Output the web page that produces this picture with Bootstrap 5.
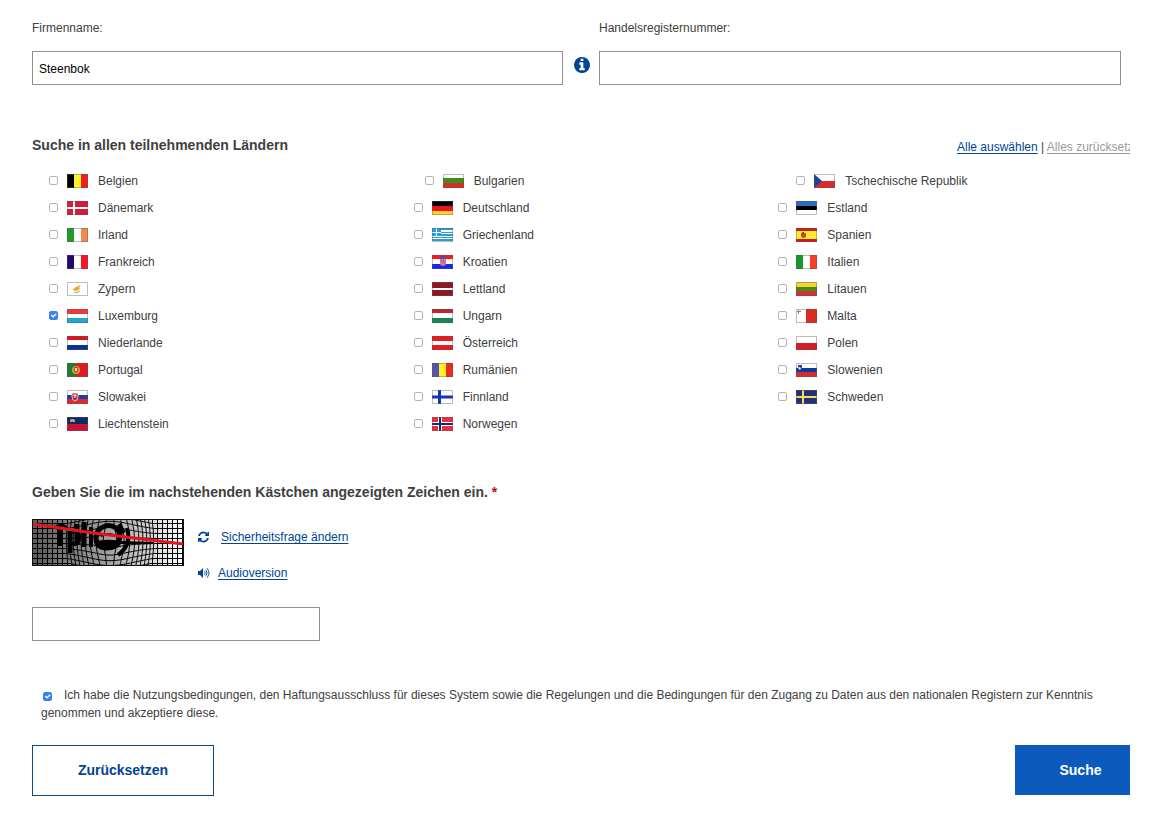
<!DOCTYPE html>
<html lang="de">
<head>
<meta charset="utf-8">
<meta name="viewport" content="width=device-width, initial-scale=1">
<title>Unternehmenssuche</title>
<link href="https://cdn.jsdelivr.net/npm/bootstrap@5.3.0/dist/css/bootstrap.min.css" rel="stylesheet">
<style>
body{font-family:"Liberation Sans",Arial,sans-serif;font-size:12px;line-height:18px;color:#404040;background:#fff}
.page{padding:19px 30px 28px 32px}
.search-fields{display:grid;grid-template-columns:531fr 36px 522fr;row-gap:14px;margin-right:9px}
.form-control{height:34px;border:1px solid #8e8e8e;border-radius:0;font-size:12px;line-height:18px;padding:8px 6px 6px;color:#000}
.search-fields .info-link{line-height:0;padding:6px 0 0 11px}
a{color:#004494;text-underline-offset:2px}
svg{fill:currentColor}
h2{font-size:14px;line-height:20px;font-weight:700;margin:0}
.countries-head{margin-top:50px}
.select-links{width:173px;overflow:hidden;white-space:nowrap;padding-top:3px}
.select-links .muted-link{color:#999}
.countries{margin:11px 4px 0 0}
.country{height:27px;padding-left:17px}
.country label{margin-left:10px}
.form-check-input[type=checkbox]{width:9px;height:9px;margin:0;border:1px solid #b4b4b4;border-radius:2px;flex:none}
.form-check-input[type=checkbox]:checked{background-color:#3b82f3;border-color:#3b82f3;background-size:9px 9px}
.indent-a{padding-left:28px}
.indent-b{padding-left:35px}
.flag{width:21px;height:14px;margin-left:9px;outline:1px solid rgba(90,90,90,.4);outline-offset:-1px;flex:none}
.captcha-head{margin-top:45px}
.req{color:#d0021b}
.captcha{width:152px;height:47px;flex:none}
.captcha-row{margin-top:17px}
.captcha-tools{margin:9px 0 0 14px;line-height:18px}
.captcha-tools li+li{margin-top:18px}
.captcha-input{width:288px;margin-top:25px}
.terms{margin-top:45px;padding:0 30px 0 9px}
.terms .form-check-input[type=checkbox]{margin:0 12px 0 2px;vertical-align:-2px}
.actions{margin-top:23px}
.btn{border-radius:0;font-size:14px;line-height:20px;font-weight:700}
.btn-reset{width:182px;height:51px;border:1px solid #0a4a80;color:#004494;padding:0 0 2px}
.btn-search{width:115px;height:50px;background:#0c5bbc;color:#fff;padding:0 28px 0 44px;border:0}
.btn-search:hover{background:#004494;color:#fff}
</style>
<script src="https://cdn.jsdelivr.net/npm/bootstrap@5.3.0/dist/js/bootstrap.bundle.min.js"></script>
</head>
<body>
<main class="page">
<form onsubmit="return false">
  <div class="search-fields">
    <label for="firm">Firmenname:</label><span></span>
    <label for="regno">Handelsregisternummer:</label>
    <input class="form-control" id="firm" type="text" value="Steenbok">
    <a class="info-link" href="#" aria-label="Hinweis"><svg width="16" height="16" viewBox="0 128 1536 1536"><path d="M1024 1376v-160q0-14-9-23t-23-9h-96v-512q0-14-9-23t-23-9h-320q-14 0-23 9t-9 23v160q0 14 9 23t23 9h96v320h-96q-14 0-23 9t-9 23v160q0 14 9 23t23 9h448q14 0 23-9t9-23zm-128-896v-160q0-14-9-23t-23-9h-192q-14 0-23 9t-9 23v160q0 14 9 23t23 9h192q14 0 23-9t9-23zm640 416q0 209-103 385.5t-279.5 279.5-385.5 103-385.5-103-279.5-279.5-103-385.5 103-385.5 279.5-279.5 385.5-103 385.5 103 279.5 279.5 103 385.5z"/></svg></a>
    <input class="form-control" id="regno" type="text">
  </div>

  <div class="countries-head d-flex justify-content-between">
    <h2>Suche in allen teilnehmenden Ländern</h2>
    <div class="select-links"><a href="#">Alle auswählen</a> | <a class="muted-link" href="#">Alles zurücksetzen</a></div>
  </div>

  <div class="countries row g-0">
    <div class="col-4 country d-flex align-items-center"><input class="form-check-input" type="checkbox" id="be"><svg class="flag" viewBox="0 0 21 14"><path fill="#000" d="M0 0h7v14H0z"/><path fill="#fff22d" d="M7 0h7v14H7z"/><path fill="#f01c24" d="M14 0h7v14h-7z"/></svg><label for="be">Belgien</label></div>
    <div class="col-4 country indent-a d-flex align-items-center"><input class="form-check-input" type="checkbox" id="bg"><svg class="flag" viewBox="0 0 21 14"><path fill="#fff" d="M0 0h21v14H0z"/><path fill="#3f9016" d="M0 4h21v6H0z"/><path fill="#d92c26" d="M0 9h21v5H0z"/></svg><label for="bg">Bulgarien</label></div>
    <div class="col-4 country indent-b d-flex align-items-center"><input class="form-check-input" type="checkbox" id="cz"><svg class="flag" viewBox="0 0 21 14"><path fill="#fff" d="M0 0h21v7H0z"/><path fill="#dc2a2a" d="M0 7h21v7H0z"/><path fill="#18449b" d="M0 0l8 7-8 7z"/></svg><label for="cz">Tschechische Republik</label></div>

    <div class="col-4 country d-flex align-items-center"><input class="form-check-input" type="checkbox" id="dk"><svg class="flag" viewBox="0 0 21 14"><path fill="#d01c3c" d="M0 0h21v14H0z"/><path fill="#fff" d="M6 0h2v14H6zM0 6h21v2H0z"/></svg><label for="dk">Dänemark</label></div>
    <div class="col-4 country d-flex align-items-center"><input class="form-check-input" type="checkbox" id="de"><svg class="flag" viewBox="0 0 21 14"><path fill="#000" d="M0 0h21v5H0z"/><path fill="#ee1512" d="M0 5h21v5H0z"/><path fill="#ffd138" d="M0 10h21v4H0z"/></svg><label for="de">Deutschland</label></div>
    <div class="col-4 country d-flex align-items-center"><input class="form-check-input" type="checkbox" id="ee"><svg class="flag" viewBox="0 0 21 14"><path fill="#2c6dc6" d="M0 0h21v5H0z"/><path fill="#000" d="M0 5h21v5H0z"/><path fill="#fff" d="M0 9h21v5H0z"/></svg><label for="ee">Estland</label></div>

    <div class="col-4 country d-flex align-items-center"><input class="form-check-input" type="checkbox" id="ie"><svg class="flag" viewBox="0 0 21 14"><path fill="#209a28" d="M0 0h7v14H0z"/><path fill="#fff" d="M7 0h7v14H7z"/><path fill="#f28a4c" d="M14 0h7v14h-7z"/></svg><label for="ie">Irland</label></div>
    <div class="col-4 country d-flex align-items-center"><input class="form-check-input" type="checkbox" id="gr"><svg class="flag border-0" viewBox="0 0 21 14"><path fill="#fff" d="M0 0h21v13H0z"/><path fill="#2c9bdc" d="M0 0h21v2H0zM0 4h21v1H0zM0 6h21v2H0zM0 9h21v1H0zM0 11h21v2H0z"/><path fill="#2c9bdc" d="M0 0h9v8H0z"/><path fill="#fff" d="M4 0h1v8H4zM0 4h9v1H0z"/></svg><label for="gr">Griechenland</label></div>
    <div class="col-4 country d-flex align-items-center"><input class="form-check-input" type="checkbox" id="es"><svg class="flag" viewBox="0 0 21 14"><path fill="#cf1720" d="M0 0h21v14H0z"/><path fill="#ffee2a" d="M0 3h21v8H0z"/><path fill="#c25a1c" d="M5 5h5v4l-2 1H7L5 9z"/><path fill="#a8442c" d="M6 4h2v3H6zM8 7h1v2H8z"/></svg><label for="es">Spanien</label></div>

    <div class="col-4 country d-flex align-items-center"><input class="form-check-input" type="checkbox" id="fr"><svg class="flag" viewBox="0 0 21 14"><path fill="#24086e" d="M0 0h7v14H0z"/><path fill="#fff" d="M7 0h7v14H7z"/><path fill="#fb1423" d="M14 0h7v14h-7z"/></svg><label for="fr">Frankreich</label></div>
    <div class="col-4 country d-flex align-items-center"><input class="form-check-input" type="checkbox" id="hr"><svg class="flag" viewBox="0 0 21 14"><path fill="#ff1517" d="M0 0h21v5H0z"/><path fill="#fff" d="M0 4h21v6H0z"/><path fill="#1728ee" d="M0 9h21v5H0z"/><path fill="#d9749b" d="M8 4h6v4q0 3-3 3T8 8z"/><path fill="#45549b" d="M8 2l1.500-1h3l1.500 1v2H8z"/><path fill="#bd3f6c" d="M9 5h1v1H9zM11 5h1v1h-1zM10 7h1v1h-1zM12 7h1v1h-1z"/></svg><label for="hr">Kroatien</label></div>
    <div class="col-4 country d-flex align-items-center"><input class="form-check-input" type="checkbox" id="it"><svg class="flag" viewBox="0 0 21 14"><path fill="#169a25" d="M0 0h7v14H0z"/><path fill="#fff" d="M7 0h7v14H7z"/><path fill="#fb3c26" d="M14 0h7v14h-7z"/></svg><label for="it">Italien</label></div>

    <div class="col-4 country d-flex align-items-center"><input class="form-check-input" type="checkbox" id="cy"><svg class="flag" viewBox="0 0 21 14"><path fill="#fff" d="M0 0h21v14H0z"/><path fill="#f3a62c" d="M6 7l3-2 5-2-2 3 1 1-3 2-3-.5z"/><path fill="none" stroke="#7dba54" stroke-width="1" d="M7 10q3 2 6-1"/></svg><label for="cy">Zypern</label></div>
    <div class="col-4 country d-flex align-items-center"><input class="form-check-input" type="checkbox" id="lv"><svg class="flag" viewBox="0 0 21 14"><path fill="#8d1824" d="M0 0h21v14H0z"/><path fill="#fff" d="M0 6h21v2H0z"/></svg><label for="lv">Lettland</label></div>
    <div class="col-4 country d-flex align-items-center"><input class="form-check-input" type="checkbox" id="lt"><svg class="flag" viewBox="0 0 21 14"><path fill="#f9d42c" d="M0 0h21v5H0z"/><path fill="#3f8d15" d="M0 5h21v5H0z"/><path fill="#d92c34" d="M0 9h21v5H0z"/></svg><label for="lt">Litauen</label></div>

    <div class="col-4 country d-flex align-items-center"><input class="form-check-input" type="checkbox" id="lu" checked><svg class="flag" viewBox="0 0 21 14"><path fill="#ed3840" d="M0 0h21v5H0z"/><path fill="#fff" d="M0 5h21v5H0z"/><path fill="#28a3d5" d="M0 9h21v5H0z"/></svg><label for="lu">Luxemburg</label></div>
    <div class="col-4 country d-flex align-items-center"><input class="form-check-input" type="checkbox" id="hu"><svg class="flag" viewBox="0 0 21 14"><path fill="#c8202f" d="M0 0h21v5H0z"/><path fill="#fff" d="M0 4h21v6H0z"/><path fill="#158651" d="M0 9h21v5H0z"/></svg><label for="hu">Ungarn</label></div>
    <div class="col-4 country d-flex align-items-center"><input class="form-check-input" type="checkbox" id="mt"><svg class="flag" viewBox="0 0 21 14"><path fill="#fff" d="M0 0h11v14H0z"/><path fill="#dc2b20" d="M10 0h11v14H10z"/><path fill="#888" d="M2 1h1v4H2zM1 2h4v1H1z"/></svg><label for="mt">Malta</label></div>

    <div class="col-4 country d-flex align-items-center"><input class="form-check-input" type="checkbox" id="nl"><svg class="flag" viewBox="0 0 21 14"><path fill="#e0141c" d="M0 0h21v5H0z"/><path fill="#fff" d="M0 4h21v6H0z"/><path fill="#0b2f96" d="M0 9h21v5H0z"/></svg><label for="nl">Niederlande</label></div>
    <div class="col-4 country d-flex align-items-center"><input class="form-check-input" type="checkbox" id="at"><svg class="flag" viewBox="0 0 21 14"><path fill="#ee161f" d="M0 0h21v14H0z"/><path fill="#fff" d="M0 5h21v4H0z"/></svg><label for="at">Österreich</label></div>
    <div class="col-4 country d-flex align-items-center"><input class="form-check-input" type="checkbox" id="pl"><svg class="flag" viewBox="0 0 21 14"><path fill="#fff" d="M0 0h21v7H0z"/><path fill="#d51d2a" d="M0 7h21v7H0z"/></svg><label for="pl">Polen</label></div>

    <div class="col-4 country d-flex align-items-center"><input class="form-check-input" type="checkbox" id="pt"><svg class="flag" viewBox="0 0 21 14"><path fill="#227b2c" d="M0 0h9v14H0z"/><path fill="#e01b20" d="M9 0h12v14H9z"/><circle cx="9" cy="7" r="4" fill="#c9a33a"/><path fill="#d8342c" d="M7 4h4v4q-2 3-4 0z"/><path fill="#f3e8d8" d="M8 5h2v3H8z"/></svg><label for="pt">Portugal</label></div>
    <div class="col-4 country d-flex align-items-center"><input class="form-check-input" type="checkbox" id="ro"><svg class="flag" viewBox="0 0 21 14"><path fill="#5555a8" d="M0 0h7v14H0z"/><path fill="#fff028" d="M7 0h8v14H7z"/><path fill="#ee2b1b" d="M14 0h7v14h-7z"/></svg><label for="ro">Rumänien</label></div>
    <div class="col-4 country d-flex align-items-center"><input class="form-check-input" type="checkbox" id="si"><svg class="flag" viewBox="0 0 21 14"><path fill="#fff" d="M0 0h21v5H0z"/><path fill="#0e3b9c" d="M0 5h21v5H0z"/><path fill="#d72c2f" d="M0 9h21v5H0z"/><path fill="#1d4aa2" d="M2 2h4v3q0 2-2 3-2-1-2-3z"/><path fill="#fff" d="M2 5l1-1 2 1-1 2z"/></svg><label for="si">Slowenien</label></div>

    <div class="col-4 country d-flex align-items-center"><input class="form-check-input" type="checkbox" id="sk"><svg class="flag" viewBox="0 0 21 14"><path fill="#fff" d="M0 0h21v5H0z"/><path fill="#193fa4" d="M0 5h21v5H0z"/><path fill="#e12b2b" d="M0 9h21v5H0z"/><path fill="#e12b2b" stroke="#fff" stroke-width=".7" d="M5 3h6v4q0 3-3 4-3-1-3-4z"/><path fill="#fff" d="M7.500 4h1v4h-1zM6.500 5h3v1h-3z"/><path fill="#193fa4" d="M6 8h4L8 10z"/></svg><label for="sk">Slowakei</label></div>
    <div class="col-4 country d-flex align-items-center"><input class="form-check-input" type="checkbox" id="fi"><svg class="flag" viewBox="0 0 21 14"><path fill="#fff" d="M0 0h21v14H0z"/><path fill="#1634b8" d="M6 0h3v14H6zM0 5.500h21v3H0z"/></svg><label for="fi">Finnland</label></div>
    <div class="col-4 country d-flex align-items-center"><input class="form-check-input" type="checkbox" id="se"><svg class="flag" viewBox="0 0 21 14"><path fill="#20307c" d="M0 0h21v14H0z"/><path fill="#fbdf50" d="M6 0h2v14H6zM0 6h21v2H0z"/></svg><label for="se">Schweden</label></div>

    <div class="col-4 country d-flex align-items-center"><input class="form-check-input" type="checkbox" id="li"><svg class="flag" viewBox="0 0 21 14"><path fill="#08286e" d="M0 0h21v7H0z"/><path fill="#cc1230" d="M0 7h21v7H0z"/><path fill="#c3a452" d="M3 3l1-1h3l1 1v2H3z"/></svg><label for="li">Liechtenstein</label></div>
    <div class="col-4 country d-flex align-items-center"><input class="form-check-input" type="checkbox" id="no"><svg class="flag" viewBox="0 0 21 14"><path fill="#ee2d41" d="M0 0h21v14H0z"/><path fill="#fff" d="M6 0h4v14H6zM0 5h21v4H0z"/><path fill="#122b66" d="M7 0h2v14H7zM0 6h21v2H0z"/></svg><label for="no">Norwegen</label></div>
  </div>

  <h2 class="captcha-head"><label for="captcha">Geben Sie die im nachstehenden Kästchen angezeigten Zeichen ein. <span class="req">*</span></label></h2>
  <div class="captcha-row d-flex align-items-start">
    <svg class="captcha" viewBox="0 0 152 47" role="img" aria-label="Sicherheitsfrage">
      <defs><linearGradient id="shade"><stop offset="0" stop-color="#5c5c5c"/><stop offset=".5" stop-color="#a0a0a0"/><stop offset="1" stop-color="#fff"/></linearGradient></defs>
      <rect width="152" height="47" fill="url(#shade)"/>
      <path id="mesh" fill="none" stroke="#000" stroke-width="1"/>
      <g fill="none" stroke="#000">
        <path stroke-width="5" d="M28 7V27M38 12V34M45 5V26M52 3V28"/>
        <path stroke-width="4" d="M23 9q7-5 12 1M39 13q9-3 8 7-1 7-8 4M59 8V28"/>
        <path stroke-width="5" d="M69 9q8-5 15 0 6 5 3 13-4 7-12 7-10 0-11-9 0-8 5-11"/>
        <path stroke-width="4" d="M95 9q5 17-9 27M87 5l5 9"/>
        <path stroke-width="2" d="M69 17q8-4 13 0"/>
      </g>
      <path fill="#000" d="M62 23q12-4 26-1l33 1v2H89q-4 6-13 6-11 0-14-8z"/>
      <path stroke="#e8131c" stroke-width="3" d="M1 5l60 9 90 11"/>
      <rect x=".5" y=".5" width="151" height="46" fill="none" stroke="#111"/>
    </svg>
    <ul class="captcha-tools list-unstyled mb-0">
      <li class="d-flex align-items-center"><a href="#" class="d-flex align-items-center" aria-label="Neu laden"><svg width="11" height="12" viewBox="128 128 1536 1536"><path d="M1639 1056q0 5-1 7-64 268-268 434.500t-478 166.500q-146 0-282.500-55t-243.500-157l-129 129q-19 19-45 19t-45-19-19-45v-448q0-26 19-45t45-19h448q26 0 45 19t19 45-19 45l-137 137q71 66 161 102t187 36q134 0 250-65t186-179q11-17 53-117 8-23 30-23h192q13 0 22.500 9.500t9.500 22.500zm25-800v448q0 26-19 45t-45 19h-448q-26 0-45-19t-19-45 19-45l138-138q-148-137-349-137-134 0-250 65t-186 179q-11 17-53 117-8 23-30 23h-199q-13 0-22.500-9.500t-9.500-22.500v-7q65-268 270-434.500t480-166.500q146 0 284 55.500t245 156.500l130-129q19-19 45-19t45 19 19 45z"/></svg></a><a class="ms-2 ps-1" href="#">Sicherheitsfrage ändern</a></li>
      <li class="d-flex align-items-center"><a href="#" class="d-flex align-items-center me-2" aria-label="Vorlesen"><svg width="12" height="12" viewBox="0 0 12 12"><path d="M0 4h2l3-3v10L2 8H0z"/><path fill="none" stroke="currentColor" stroke-width=".9" d="M6.500 4.300q1.500 1.700 0 3.400M7.700 2.700q2.800 3.300 0 6.600M9 1.200q4 4.800 0 9.600"/></svg></a><a href="#">Audioversion</a></li>
    </ul>
  </div>
  <input class="form-control captcha-input" id="captcha" type="text">

  <div class="terms"><input class="form-check-input" type="checkbox" id="terms" checked><label class="d-inline" for="terms">Ich habe die Nutzungsbedingungen, den Haftungsausschluss für dieses System sowie die Regelungen und die Bedingungen für den Zugang zu Daten aus den nationalen Registern zur Kenntnis genommen und akzeptiere diese.</label></div>

  <div class="actions d-flex justify-content-between align-items-start">
    <button class="btn btn-reset" type="reset">Zurücksetzen</button>
    <button class="btn btn-search" type="submit">Suche</button>
  </div>
</form>
</main>
<script>
// Mesh behind the captcha characters, bulging around its centre
(function(){
  const cx=78, cy=22, radius=46;
  function warp(x,y){
    const dx=x-cx, dy=y-cy, d=Math.hypot(dx,dy);
    if(d>=radius||d===0) return x.toFixed(1)+' '+y.toFixed(1);
    const k=Math.pow(d/radius,-0.35);
    return (cx+dx*k).toFixed(1)+' '+(cy+dy*k).toFixed(1);
  }
  let d='';
  for(let x=5.5;x<152;x+=5) for(let y=0;y<=47;y+=2) d+=(y?'L':'M')+warp(x,y);
  for(let y=4.5;y<47;y+=5) for(let x=0;x<=152;x+=2) d+=(x?'L':'M')+warp(x,y);
  document.getElementById('mesh').setAttribute('d',d);
})();
</script>
</body>
</html>
